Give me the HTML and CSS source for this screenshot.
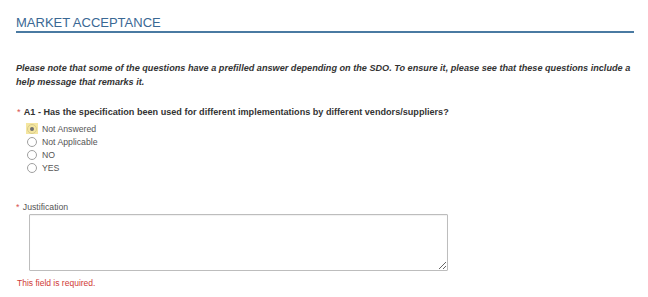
FILE: index.html
```html
<!DOCTYPE html>
<html>
<head>
<meta charset="utf-8">
<link rel="stylesheet" href="styles.css">
</head>
<body>
<div class="page">
  <h2 class="section-title">MARKET ACCEPTANCE</h2>
  <p class="note">Please note that some of the questions have a prefilled answer depending on the SDO. To ensure it, please see that these questions include a help message that remarks it.</p>

  <div class="question">
    <div class="q-label"><span class="req">*</span> A1 - Has the specification been used for different implementations by different vendors/suppliers?</div>
    <div class="options">
      <label class="opt"><span class="radio-wrap selected"><span class="radio checked"></span></span>Not Answered</label>
      <label class="opt"><span class="radio-wrap"><span class="radio"></span></span>Not Applicable</label>
      <label class="opt"><span class="radio-wrap"><span class="radio"></span></span>NO</label>
      <label class="opt"><span class="radio-wrap"><span class="radio"></span></span>YES</label>
    </div>
  </div>

  <div class="justification">
    <div class="j-label"><span class="req">*</span> Justification</div>
    <div class="textarea-box"><textarea class="ta"></textarea></div>
    <div class="error">This field is required.</div>
  </div>
</div>
</body>
</html>
```

FILE: styles.css
```css
html, body {
  margin: 0;
  padding: 0;
  background: #ffffff;
}
body {
  font-family: "Liberation Sans", Arial, sans-serif;
  color: #333;
}
.page {
  padding: 14px 14px 0 16px;
}
.section-title {
  margin: 0;
  font-size: 13px;
  font-weight: normal;
  color: #3a6894;
  line-height: 17px;
  padding-bottom: 0;
  border-bottom: 2px solid #4a7aa2;
}
.note {
  margin: 28px 0 0 0;
  font-size: 9.15px;
  font-weight: bold;
  font-style: italic;
  color: #333;
  line-height: 14px;
}
.question {
  margin-top: 17px;
}
.q-label {
  font-size: 9.1px;
  font-weight: bold;
  color: #333;
  line-height: 13px;
}
.req {
  color: #d9534f;
  font-weight: normal;
  margin-left: 1px;
  margin-right: 1px;
}
.options {
  padding-left: 10px;
  margin-top: 3px;
}
.opt {
  display: flex;
  align-items: center;
  height: 13px;
  font-size: 8.7px;
  color: #555;
}
.radio-wrap {
  display: flex;
  align-items: center;
  justify-content: center;
  width: 12px;
  height: 11px;
  margin-right: 4px;
}
.radio-wrap.selected {
  background: #f5e6a0;
}
.radio {
  width: 8px;
  height: 8px;
  border: 1px solid #a0a0a0;
  border-radius: 50%;
  box-sizing: content-box;
  background: #fff;
  display: flex;
  align-items: center;
  justify-content: center;
}
.radio.checked {
  background: #f5e6a0;
  border-color: #d8cc8c;
}
.radio.checked::after {
  content: "";
  width: 4px;
  height: 4px;
  border-radius: 50%;
  background: #707070;
}
.justification {
  margin-top: 27px;
}
.j-label {
  font-size: 8.7px;
  color: #555;
  line-height: 13px;
}
.j-label .req {
  margin-left: 0;
}
.textarea-box {
  padding-left: 13px;
}
.ta {
  display: block;
  box-sizing: border-box;
  width: 419px;
  height: 57px;
  margin: 0;
  border: 1px solid #bdbdbd;
  border-radius: 1px;
  box-shadow: inset 0 1px 1px rgba(0,0,0,0.06);
  font-family: "Liberation Sans", Arial, sans-serif;
}
.error {
  margin-top: 6px;
  font-size: 8.5px;
  color: #cf3a36;
  line-height: 13px;
  padding-left: 1px;
}
```
